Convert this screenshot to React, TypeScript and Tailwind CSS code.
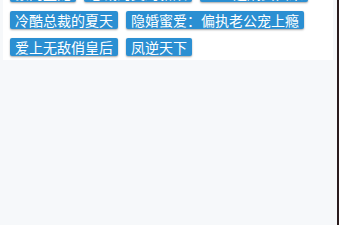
const ROWS: string[][] = [
  ["豪门盛宠", "总裁的契约新娘", "重生之嫡女归来"],
  ["冷酷总裁的夏天", "隐婚蜜爱：偏执老公宠上瘾"],
  ["爱上无敌俏皇后", "凤逆天下"],
];

function Tag({ label }: { label: string }) {
  return (
    <span className="h-[18px] px-[5px] rounded-[2px] bg-[#2b8fd2] text-white text-[14px] leading-[18px] shadow-[0_1px_2px_rgba(0,0,0,0.35)] whitespace-nowrap">
      {label}
    </span>
  );
}

export default function App() {
  return (
    <div
      className="w-[339px] h-[225px] overflow-hidden flex bg-[#f6f8fa]"
      style={{ fontFamily: '"Noto Sans CJK SC", "Noto Sans", sans-serif' }}
    >
      <div className="flex-1">
        <div className="ml-[3px] mr-[4px] bg-white h-[60px] overflow-hidden">
          <div className="-mt-[16px] px-[7px] flex flex-col gap-[9px]">
            {ROWS.map((row, i) => (
              <div key={i} className="flex gap-[8px]">
                {row.map((t) => (
                  <Tag key={t} label={t} />
                ))}
              </div>
            ))}
          </div>
        </div>
      </div>
      <div className="w-[2px] bg-[#2a1c1e]" />
    </div>
  );
}
